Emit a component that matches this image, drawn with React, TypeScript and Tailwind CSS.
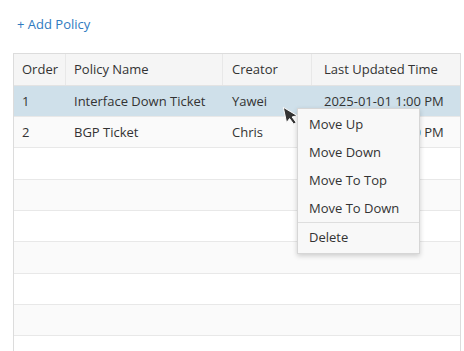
import React from "react";

const rows = [
  { order: "1", name: "Interface Down Ticket", creator: "Yawei", time: "2025-01-01 1:00 PM" },
  { order: "2", name: "BGP Ticket", creator: "Chris", time: "2025-01-01 1:00 PM" },
  null, null, null, null, null, null, null,
];

export default function App() {
  return (
    <div
      className="relative w-[464px] h-[351px] overflow-hidden bg-white text-[13px] text-[#333]"
      style={{ fontFamily: '"Open Sans", "Noto Sans", sans-serif' }}
    >
      <div className="pl-[17px] pt-[14px] h-[53px]">
        <span className="text-[#2f7bbf] leading-[20px]">+ Add Policy</span>
      </div>
      <div className="ml-[13px] w-[448px] border-l border-t border-r border-[#dcdcdc]">
        <div className="flex h-[31.5px] bg-[#f5f5f5] border-b border-[#e3e3e3] items-center">
          <div className="w-[52px] pl-[8px] pt-[1px] h-full flex items-center border-r border-[#e8e8e8]">Order</div>
          <div className="w-[157px] pl-[8px] pt-[1px] h-full flex items-center border-r border-[#e8e8e8]">Policy Name</div>
          <div className="w-[89px] pl-[9px] pt-[1px] h-full flex items-center border-r border-[#e8e8e8]">Creator</div>
          <div className="flex-1 pl-[12px] pt-[1px] h-full flex items-center">Last Updated Time</div>
        </div>
        {rows.map((r, i) => (
          <div
            key={i}
            className={
              "flex items-center pt-[2px] h-[31.35px] border-b border-[#e8e8e8] " +
              (i === 0 ? "bg-[#cfe0ea]" : i % 2 === 1 ? "bg-[#fafafa]" : "bg-white")
            }
          >
            <div className="w-[52px] pl-[8px]">{r?.order}</div>
            <div className="w-[157px] pl-[8px]">{r?.name}</div>
            <div className="w-[89px] pl-[9px]">{r?.creator}</div>
            <div className="flex-1 pl-[12px]">{r?.time}</div>
          </div>
        ))}
      </div>

      <div className="absolute left-[297px] top-[108px] w-[123px] bg-[#f8f8f8] border border-[#d6d6d6] shadow-[0_2px_5px_rgba(0,0,0,0.18)] pt-[2px] pb-[1px]">
        {["Move Up", "Move Down", "Move To Top", "Move To Down"].map((t) => (
          <div key={t} className="h-[28px] flex items-center pl-[11px]">
            {t}
          </div>
        ))}
        <div className="border-t border-[#dedede] -mt-[1px]" />
        <div className="h-[29px] flex items-center pl-[11px] pt-[1px]">Delete</div>
      </div>

      <svg
        className="absolute left-[282px] top-[106px]"
        width="20"
        height="22"
        viewBox="0 0 20 22"
      >
        <path
          d="M1.3 1.3 L1.3 17 L5.1 13.6 L8 20 L10.7 18.8 L7.9 12.6 L13.2 12.4 Z"
          fill="#333333"
          stroke="#ffffff"
          strokeWidth="0.9"
          strokeLinejoin="round"
          transform="rotate(-12 1.3 1.3)"
        />
      </svg>
    </div>
  );
}
